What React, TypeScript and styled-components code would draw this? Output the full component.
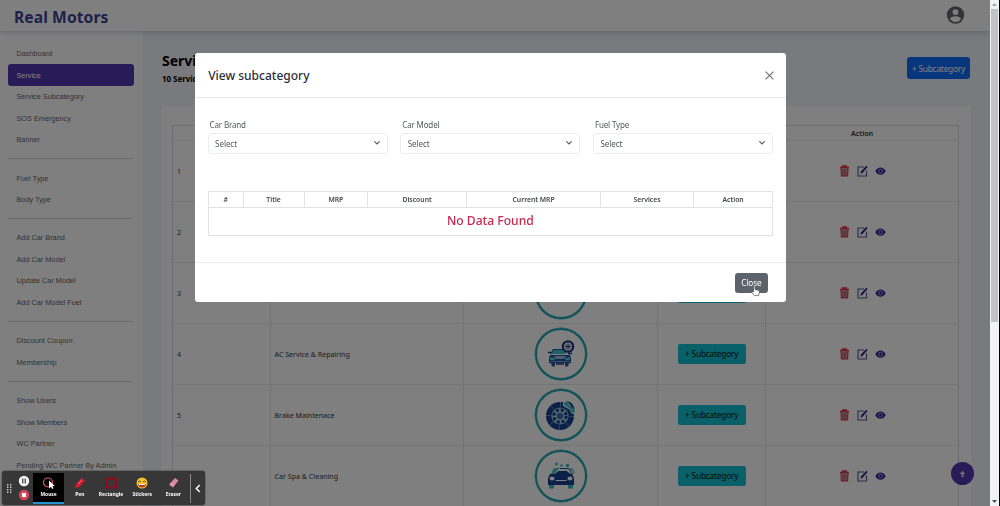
import React from 'react';
import styled, { createGlobalStyle } from 'styled-components';

const GlobalStyle = createGlobalStyle`
    * {
        box-sizing: border-box;
    }
    html, body, #root {
        height: 100%;
    }
    body {
        margin: 0;
        overflow: hidden;
        background: #fff;
        color: #212529;
        font-family: "Noto Sans", "Open Sans", sans-serif;
        font-size: 7.1px;
    }
    button {
        font-family: inherit;
        border: 0;
        padding: 0;
    }
    svg {
        display: block;
        flex: none;
    }
`;

const Page = styled.div`
    width: 990px;
    height: 506px;
    overflow: hidden;
    display: flex;
    flex-direction: column;
`;

const Header = styled.header`
    position: relative;
    z-index: 1;
    flex: none;
    height: 31px;
    padding: 0 25px 0 14px;
    display: flex;
    align-items: center;
    justify-content: space-between;
    background: #fff;
    box-shadow: 0 1px 5px rgba(1, 41, 112, 0.25);
`;

const Brand = styled.h1`
    margin: 2px 0 0;
    color: #3c4296;
    font-size: 15.6px;
    line-height: 22px;
    font-weight: 700;
    letter-spacing: 0.1px;
`;

const Content = styled.div`
    flex: 1;
    min-height: 0;
    display: flex;
`;

const Sidebar = styled.nav`
    width: 142px;
    flex: none;
    padding: 12px 8px 0;
    background: #fff;
    font-family: "Liberation Sans", Arial, sans-serif;
`;

const NavItem = styled.div<{ $active?: boolean }>`
    height: 21.45px;
    padding-left: 8.5px;
    display: flex;
    align-items: center;
    width: 125.5px;
    border-radius: 3px;
    font-size: 7.3px;
    white-space: nowrap;
    color: ${(p) => (p.$active ? '#fff' : '#666')};
    background: ${(p) => (p.$active ? '#4f38b0' : 'transparent')};
`;

const Divider = styled.hr`
    width: 125px;
    height: 1px;
    margin: 8.1px 0 8px;
    border: 0;
    background: #d6d6d6;
`;

const Main = styled.main`
    flex: 1;
    padding: 22px 19px 0 20px;
    background: #f1f4fb;
`;

const TitleRow = styled.div`
    display: flex;
    justify-content: space-between;
    height: 53px;
`;

const PageTitle = styled.h2`
    margin: -2px 0 0;
    font-size: 14px;
    line-height: 20px;
    font-weight: 700;
    color: #000;
`;

const Count = styled.div`
    margin-top: 2px;
    font-size: 8px;
    line-height: 12px;
    font-weight: 700;
    letter-spacing: -0.05px;
    color: #000;
`;

const AddButton = styled.button`
    width: 63px;
    height: 22px;
    margin: 4px 1px 0 0;
    border-radius: 3px;
    background: #0f6dfb;
    color: #fff;
    font-size: 8.3px;
    letter-spacing: -0.2px;
`;

const Panel = styled.section`
    height: 420px;
    padding: 19px 12px 0 10px;
    background: #fff;
`;

const ServiceTable = styled.div`
    border: 1px solid #d9dade;
    border-bottom: 0;
`;

const ServiceRow = styled.div<{ $head?: boolean }>`
    display: grid;
    grid-template-columns: 96.5px 193.7px 194px 108px 1fr;
    height: ${(p) => (p.$head ? '15.2px' : '60.95px')};
    border-bottom: 1px solid #e9eaed;
    font-weight: ${(p) => (p.$head ? 600 : 400)};
`;

const Cell = styled.div<{ $center?: boolean }>`
    display: flex;
    align-items: center;
    justify-content: ${(p) => (p.$center ? 'center' : 'flex-start')};
    padding-left: ${(p) => (p.$center ? 0 : '4px')};
    color: #33373c;

    & + & {
        border-left: 1px solid #e6e8eb;
    }
`;

const ServiceImage = styled.div`
    width: 52px;
    height: 52px;
    display: flex;
    align-items: center;
    justify-content: center;
    border: 2px solid #1fa3b3;
    border-radius: 50%;
    box-shadow: 0 0 0 0.4px #1fa3b3;
`;

const InfoButton = styled.button`
    width: 68px;
    height: 20px;
    border-radius: 2px;
    background: #12c0d2;
    color: #111;
    font-size: 8.3px;
    letter-spacing: -0.2px;
`;

const Actions = styled.div`
    display: flex;
    align-items: center;
    gap: 7px;
`;

const ScrollTop = styled.div`
    position: fixed;
    left: 951px;
    top: 462px;
    width: 23px;
    height: 23px;
    display: flex;
    align-items: center;
    justify-content: center;
    border-radius: 50%;
    background: #4f38b0;
`;

const Backdrop = styled.div`
    position: fixed;
    z-index: 5;
    top: 0;
    left: 0;
    width: 990px;
    height: 506px;
    padding: 52.6px 0 0 194.6px;
    background: rgba(0, 0, 0, 0.5);
`;

const Modal = styled.div`
    width: 591.5px;
    height: 249.5px;
    display: flex;
    flex-direction: column;
    border-radius: 3px;
    background: #fff;
`;

const ModalHeader = styled.div`
    height: 45px;
    padding: 1px 12.6px 0 13.6px;
    display: flex;
    align-items: center;
    justify-content: space-between;
    border-bottom: 1px solid #e6e8ec;
`;

const ModalTitle = styled.h3`
    margin: 1px 0 0;
    font-size: 12px;
    line-height: 16px;
    font-weight: 500;
    color: #2b2f33;
`;

const ModalBody = styled.div`
    flex: 1;
    padding: 20px 13px 0;
`;

const Filters = styled.div`
    display: grid;
    grid-template-columns: repeat(3, 1fr);
    gap: 12.5px;
`;

const Label = styled.div`
    height: 15px;
    padding-left: 2px;
    font-size: 8px;
    line-height: 14px;
    letter-spacing: -0.15px;
    color: #55595e;
`;

const SelectBox = styled.div`
    height: 21px;
    padding: 0 6px 0 6.5px;
    display: flex;
    align-items: center;
    justify-content: space-between;
    border: 1px solid #eaecef;
    border-radius: 3px;
    font-size: 8px;
    letter-spacing: -0.05px;
    color: #55595e;
`;

const DataTable = styled.div`
    height: 45.5px;
    margin-top: 37.2px;
    border: 1px solid #e1e3e6;
`;

const DataHead = styled.div`
    display: grid;
    grid-template-columns: 34px 61px 63.5px 99px 134px 93px 1fr;
    height: 16px;
    border-bottom: 1px solid #e1e3e6;
    font-size: 6.8px;
    font-weight: 600;
    color: #44484c;
`;

const HeadCell = styled.div`
    display: flex;
    align-items: center;
    justify-content: center;

    & + & {
        border-left: 1px solid #e1e3e6;
    }
`;

const Empty = styled.div`
    height: 25px;
    font-size: 12.1px;
    line-height: 25px;
    font-weight: 500;
    text-align: center;
    color: #c9284f;
`;

const ModalFooter = styled.div`
    height: 40px;
    padding: 0 18px;
    display: flex;
    align-items: center;
    justify-content: flex-end;
    border-top: 1px solid #e9ebee;
`;

const CloseButton = styled.button`
    width: 33.5px;
    height: 20px;
    border-radius: 3px;
    background: #5c636a;
    color: #fff;
    font-size: 8.2px;
    letter-spacing: -0.1px;
`;

const Pointer = styled.svg`
    position: fixed;
    z-index: 7;
    left: 751px;
    top: 285px;
`;

const Scrollbar = styled.div`
    position: fixed;
    top: 0;
    right: 0;
    width: 10px;
    height: 506px;
    padding: 0 1px;
    display: flex;
    flex-direction: column;
    align-items: center;
    background: #f1f2f4;
    border-right: 1px solid #000;
`;

const Arrow = styled.div<{ $down?: boolean }>`
    height: 9px;
    display: flex;
    align-items: center;
    margin-top: ${(p) => (p.$down ? 'auto' : 0)};
`;

const Thumb = styled.div`
    width: 7px;
    height: 313px;
    background: #c1c2c4;
`;

const Recorder = styled.div`
    position: fixed;
    z-index: 8;
    left: 2px;
    top: 471px;
    width: 203px;
    height: 34px;
    padding-left: 5px;
    display: flex;
    align-items: center;
    border-radius: 3px;
    background: #373737;
    box-shadow: 0 0 2px rgba(0, 0, 0, 0.7);
`;

const RecordControls = styled.div`
    width: 21px;
    padding-left: 6px;
    display: flex;
    flex-direction: column;
    gap: 2px;
`;

const Tool = styled.div<{ $active?: boolean }>`
    width: 31.2px;
    height: 31px;
    padding-top: 3px;
    display: flex;
    flex-direction: column;
    align-items: center;
    font-size: 4.9px;
    line-height: 8px;
    font-weight: 700;
    color: #fff;
    background: ${(p) => (p.$active ? '#000' : 'transparent')};
    border-bottom: 2px solid ${(p) => (p.$active ? '#2196d3' : 'transparent')};
`;

const Collapse = styled.div`
    height: 29px;
    margin-left: 1px;
    padding-left: 4px;
    display: flex;
    align-items: center;
    border-left: 1px solid #8a8a8a;
`;

const navGroups = [
    ['Dashboard', 'Service', 'Service Subcategory', 'SOS Emergency', 'Banner'],
    ['Fuel Type', 'Body Type'],
    ['Add Car Brand', 'Add Car Model', 'Update Car Model', 'Add Car Model Fuel'],
    ['Discount Coupon', 'Membership'],
    ['Show Users', 'Show Members', 'WC Partner', 'Pending WC Partner By Admin'],
];

const services = [
    { id: 1, name: '' },
    { id: 2, name: '' },
    { id: 3, name: '' },
    { id: 4, name: 'AC Service & Repairing', icon: <AcIcon /> },
    { id: 5, name: 'Brake Maintenace', icon: <BrakeIcon /> },
    { id: 6, name: 'Car Spa & Cleaning', icon: <SpaIcon /> },
];

function AcIcon() {
    return (
        <svg width="30" height="30" viewBox="0 0 30 30" fill="none">
            <path d="M7 10h11l2 5H5z" fill="#3fc4c9" />
            <path d="M7 10.5h10M5 15l2-4.5" stroke="#1b4f9e" />
            <circle cx="22" cy="7.5" r="5.3" stroke="#14327c" strokeWidth="2" />
            <path d="M22 3.5v8M18 7.5h8M19.3 4.8l5.4 5.4M24.7 4.8l-5.4 5.4" stroke="#14327c" strokeWidth=".8" />
            <path d="M2 13.5h3M22 14.5h4" stroke="#14327c" strokeWidth="1.6" />
            <path d="M4 16h20l1 3v5H3v-5z" fill="#1b4f9e" />
            <path d="M4 18l5 1v2H4zM24 18l-5 1v2h5z" fill="#5fc6da" />
            <path d="M8 17h12l-2 3h-8z" fill="#9fbfda" />
            <path d="M4 22.5h20" stroke="#9fbfda" strokeWidth=".8" />
            <path d="M5 24h4v3.5H6zM19 24h4l-1 3.5h-3z" fill="#31569a" />
            <path d="M10 25h8" stroke="#14327c" strokeWidth="1.5" />
        </svg>
    );
}

function BrakeIcon() {
    return (
        <svg width="30" height="30" viewBox="0 0 30 30" fill="none">
            <circle cx="14" cy="16" r="14" fill="#14408e" />
            <circle cx="14" cy="16" r="11.5" stroke="#6a95c4" strokeWidth="5" strokeDasharray=".8 8.2" />
            <circle cx="14" cy="16" r="8.6" fill="#a9cbdc" />
            <circle cx="14" cy="16" r="6.2" stroke="#14408e" strokeWidth="3" strokeDasharray="3 1.87" />
            <circle cx="14" cy="16" r="3.2" fill="#3b72b4" />
            <path d="M17 3l4-3 7 6 2 7-4 1-3-5-6-3z" fill="#fff" />
            <path d="M18 3l3-2 2 4 4 2 2 5-3 1-3-5-5-3z" fill="#3fc4c9" />
            <path d="M21 1q6 1 8 9l-3-3z" fill="#14327c" />
        </svg>
    );
}

function SpaIcon() {
    return (
        <svg width="30" height="30" viewBox="0 0 30 30" fill="none">
            <circle cx="10.5" cy="3" r="1.4" fill="#35b8c4" />
            <circle cx="15.5" cy="4.5" r="1.2" fill="#35b8c4" />
            <circle cx="21.5" cy="4.5" r="1.7" fill="#35b8c4" />
            <circle cx="25.5" cy="8" r="1" fill="#35b8c4" />
            <path d="M5 13l2.5-5.5L14 6.5 8 13z" fill="#3fc4c9" />
            <path d="M14 7.5h9l3 6" stroke="#1b4f9e" />
            <path d="M19 9l3 3M24 9l2 4 2-1-1-3z" stroke="#35b8c4" />
            <path d="M8.5 13l4-3h8l4 3z" fill="#14408e" />
            <path d="M4 13h22l2 4v7H2v-7z" fill="#14408e" />
            <ellipse cx="6" cy="17.5" rx="2.5" ry="2" fill="#fff" />
            <ellipse cx="24" cy="17.5" rx="2.5" ry="2" fill="#fff" />
            <path d="M9.5 19.5h11" stroke="#fff" />
            <path d="M3 24h5v3.5H3zM22 24h5v3.5h-5z" fill="#35b8c4" />
        </svg>
    );
}

function TrashIcon() {
    return (
        <svg width="11" height="12" viewBox="0 0 11 12" fill="none" stroke="#e0354c">
            <path d="M1 2.5h9M3.5 2V1h4v1" strokeWidth="1.3" />
            <path d="M2 3l.4 7.9h6.2L9 3" fill="#b99a9f" strokeWidth="1.1" />
            <path d="M4.2 4.5v5M5.5 4.5v5M6.8 4.5v5" strokeWidth=".6" />
        </svg>
    );
}

function EditIcon() {
    return (
        <svg width="11" height="12" viewBox="0 0 11 12" fill="none">
            <path d="M7 2H1v9h8.5V5.5" stroke="#5c5795" strokeWidth="1.1" />
            <path d="M3.5 8.8L4 6.6 9.3.8l1.3 1.2-5.2 5.9z" fill="#2c2292" />
        </svg>
    );
}

function EyeIcon() {
    return (
        <svg width="11" height="12" viewBox="0 0 11 12">
            <path d="M.3 6.2Q2.4 2.6 5.5 2.6t5.2 3.6Q8.6 9.7 5.5 9.7T.3 6.2z" fill="#35259a" />
            <circle cx="5.5" cy="6.1" r="2" fill="#35259a" stroke="#b5b3de" strokeWidth=".9" />
        </svg>
    );
}

function Chevron() {
    return (
        <svg width="8" height="6" viewBox="0 0 8 6" fill="none">
            <path d="M1.7 1.7L4 4l2.3-2.3" stroke="#5a5f65" strokeWidth="1.2" strokeLinecap="round" />
        </svg>
    );
}

function Triangle({ down }: { down?: boolean }) {
    return (
        <svg width="5" height="3" viewBox="0 0 5 3">
            <path d={down ? 'M0 0h5L2.5 3z' : 'M0 3h5L2.5 0z'} fill={down ? '#4d4d4d' : '#a3a3a3'} />
        </svg>
    );
}

const tools = [
    {
        name: 'Mouse',
        icon: (
            <>
                <circle cx="6" cy="6.5" r="4.5" stroke="#dd5876" strokeWidth="1.2" />
                <path d="M7 4.5v8l2-1.7 1 2.2 1.5-.7-1-2.2h2.3z" fill="#fff" />
            </>
        ),
    },
    {
        name: 'Pen',
        icon: (
            <>
                <path d="M8.5 2L12 4.5 6.5 11 2 12l1.2-4z" fill="#d91c2b" />
                <path d="M5 8l4-4" stroke="#ff6b70" />
            </>
        ),
    },
    { name: 'Rectangle', icon: <rect x="2.8" y="2.5" width="9" height="9" stroke="#850f22" strokeWidth="2.4" /> },
    {
        name: 'Stickers',
        icon: (
            <>
                <circle cx="7" cy="7" r="5.5" fill="#f6c12c" />
                <path d="M3 6q1.5-2 3 0M8 6q1.500-2 3 0" stroke="#70440a" />
                <path d="M3 8h8q-.8 3.5-4 3.5T3 8z" fill="#b8362b" />
                <path d="M4 8.5h6" stroke="#fff" />
            </>
        ),
    },
    {
        name: 'Eraser',
        icon: (
            <>
                <path d="M9 2l3.5 2.5-5.500 7-4-2.800z" fill="#dc87a4" />
                <path d="M4.5 7L8 9.800" stroke="#eeb0c4" />
            </>
        ),
    },
];

const columns = ['#', 'Title', 'MRP', 'Discount', 'Current MRP', 'Services', 'Action'];

export default function App() {
    return (
        <>
            <GlobalStyle />
            <Page>
                <Header>
                    <Brand>Real Motors</Brand>
                    <svg width="19" height="19" viewBox="0 0 19 19">
                        <circle cx="9.5" cy="9" r="8.7" fill="#68696d" />
                        <circle cx="9.5" cy="6.1" r="2.9" fill="#fff" />
                        <path d="M4 13q1-2.7 5.5-2.7T15 13q-2 3-5.5 3T4 13z" fill="#fff" />
                    </svg>
                </Header>
                <Content>
                    <Sidebar>
                        {navGroups.map((group, i) => (
                            <React.Fragment key={group[0]}>
                                {i > 0 && <Divider />}
                                {group.map((item) => (
                                    <NavItem key={item} $active={item === 'Service'}>
                                        {item}
                                    </NavItem>
                                ))}
                            </React.Fragment>
                        ))}
                    </Sidebar>
                    <Main>
                        <TitleRow>
                            <div>
                                <PageTitle>Services</PageTitle>
                                <Count>10 Services</Count>
                            </div>
                            <AddButton>+ Subcategory</AddButton>
                        </TitleRow>
                        <Panel>
                            <ServiceTable>
                                <ServiceRow $head>
                                    <Cell $center />
                                    <Cell $center />
                                    <Cell $center />
                                    <Cell $center />
                                    <Cell $center>Action</Cell>
                                </ServiceRow>
                                {services.map((service) => (
                                    <ServiceRow key={service.id}>
                                        <Cell>{service.id < 6 ? service.id : ''}</Cell>
                                        <Cell>{service.name}</Cell>
                                        <Cell $center>
                                            <ServiceImage>{service.icon}</ServiceImage>
                                        </Cell>
                                        <Cell $center>
                                            <InfoButton>+ Subcategory</InfoButton>
                                        </Cell>
                                        <Cell $center>
                                            <Actions>
                                                <TrashIcon />
                                                <EditIcon />
                                                <EyeIcon />
                                            </Actions>
                                        </Cell>
                                    </ServiceRow>
                                ))}
                            </ServiceTable>
                        </Panel>
                    </Main>
                </Content>
                <ScrollTop>
                    <svg width="7" height="8" viewBox="0 0 7 8">
                        <path d="M3.5.8L6.3 4H4.5v3h-2V4H.7z" fill="#ddd" />
                    </svg>
                </ScrollTop>
            </Page>
            <Backdrop>
                <Modal>
                    <ModalHeader>
                        <ModalTitle>View subcategory</ModalTitle>
                        <svg width="9" height="9" viewBox="0 0 9 9">
                            <path d="M.6.6l7.8 7.8M8.4.6L.6 8.4" stroke="#707377" strokeWidth="1.2" />
                        </svg>
                    </ModalHeader>
                    <ModalBody>
                        <Filters>
                            {['Car Brand', 'Car Model', 'Fuel Type'].map((label) => (
                                <div key={label}>
                                    <Label>{label}</Label>
                                    <SelectBox>
                                        Select
                                        <Chevron />
                                    </SelectBox>
                                </div>
                            ))}
                        </Filters>
                        <DataTable>
                            <DataHead>
                                {columns.map((column) => (
                                    <HeadCell key={column}>{column}</HeadCell>
                                ))}
                            </DataHead>
                            <Empty>No Data Found</Empty>
                        </DataTable>
                    </ModalBody>
                    <ModalFooter>
                        <CloseButton>Close</CloseButton>
                    </ModalFooter>
                </Modal>
            </Backdrop>
            <Pointer width="9" height="12" viewBox="0 0 9 12">
                <path
                    d="M2.5 7V1.5q.8-1 1.5 0v3l3.5.8q1 .3.9 1.5l-.7 3.800H3.500L.7 7.300q.3-1 1.800-.3z"
                    fill="#fff"
                    stroke="#4c4f53"
                    strokeWidth=".7"
                />
            </Pointer>
            <Scrollbar>
                <Arrow>
                    <Triangle />
                </Arrow>
                <Thumb />
                <Arrow $down>
                    <Triangle down />
                </Arrow>
            </Scrollbar>
            <Recorder>
                <svg width="5" height="9" viewBox="0 0 5 9" fill="#ccc">
                    <path d="M0 0h1.4v1.4H0zM3 0h1.4v1.4H3zM0 2.5h1.4v1.4H0zM3 2.5h1.4v1.4H3zM0 5h1.4v1.4H0zM3 5h1.4v1.4H3zM0 7.5h1.4v1.4H0zM3 7.5h1.4v1.4H3z" />
                </svg>
                <RecordControls>
                    <svg width="12" height="12" viewBox="0 0 12 12">
                        <circle cx="6" cy="6" r="5.2" fill="#f4f4f4" />
                        <path d="M4.7 3.5v5M7.3 3.5v5" stroke="#444" strokeWidth="1.3" />
                    </svg>
                    <svg width="12" height="12" viewBox="0 0 12 12">
                        <circle cx="6" cy="6" r="5.2" fill="#d74658" />
                        <path d="M4 4h4v4H4z" fill="#fff" />
                    </svg>
                </RecordControls>
                {tools.map((tool) => (
                    <Tool key={tool.name} $active={tool.name === 'Mouse'}>
                        <svg width="14" height="14" viewBox="0 0 14 14" fill="none">
                            {tool.icon}
                        </svg>
                        {tool.name}
                    </Tool>
                ))}
                <Collapse>
                    <svg width="6" height="9" viewBox="0 0 6 9" fill="none">
                        <path d="M4.8 1L1.3 4.5 4.8 8" stroke="#fff" strokeWidth="1.5" />
                    </svg>
                </Collapse>
            </Recorder>
        </>
    );
}
